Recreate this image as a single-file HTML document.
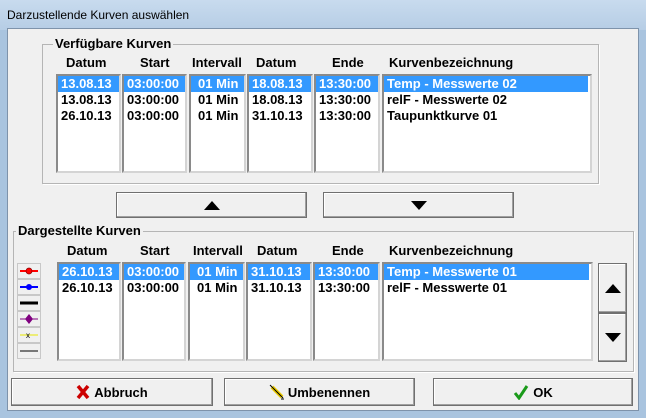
<html><head><style>
body{margin:0;width:646px;height:418px;background:#a9c4df;font-family:"Liberation Sans",sans-serif;position:relative;overflow:hidden}
.a{position:absolute}
.t{font-size:12px;color:#000}
.b{font-weight:bold;font-size:13px}
.lst{position:absolute;background:#fff;border:2px solid #8a8a8a;border-right-color:#d4d4d4;border-bottom-color:#d4d4d4;box-sizing:border-box;overflow:hidden}
.lst div{height:16px;line-height:16px;padding-left:3px;font-weight:bold;font-size:13px;white-space:nowrap}
.sel{background:#3399ff;color:#fff}
.btn{position:absolute;background:#f0f0f0;border:1px solid #707070;box-sizing:border-box;box-shadow:inset -1px -1px #a0a0a0,inset 1px 1px #fff;display:flex;align-items:center;justify-content:center;font-weight:bold;font-size:13px}
.grp{position:absolute;border:1px solid #b5b5b5;box-shadow:1px 1px #fff}
.lab{position:absolute;background:#f0f0f0;font-weight:bold;font-size:13px;padding:0 2px}
.hd{position:absolute;font-weight:bold;font-size:13px}
.leg{position:absolute;left:17px;width:24px;height:16px;background:#f0f0f0;border:1px solid #c8c8c8;box-sizing:border-box}
</style></head><body>
<div class="a" style="left:0;top:0;width:646px;height:30px;background:linear-gradient(#c8dbee,#b6cde5)"></div>
<div class="a t" style="left:7px;top:8px;font-size:12px">Darzustellende Kurven auswählen</div>
<div class="a" style="left:7px;top:28px;width:632px;height:383px;background:#f0f0f0;border:1px solid #7e93ab;box-sizing:border-box"></div>

<div class="grp" style="left:42px;top:44px;width:555px;height:138px"></div>
<div class="lab" style="left:53px;top:36px">Verfügbare Kurven</div>
<div class="hd" style="left:66px;top:55px">Datum</div>
<div class="hd" style="left:140px;top:55px">Start</div>
<div class="hd" style="left:192px;top:55px">Intervall</div>
<div class="hd" style="left:256px;top:55px">Datum</div>
<div class="hd" style="left:332px;top:55px">Ende</div>
<div class="hd" style="left:389px;top:55px">Kurvenbezeichnung</div>
<div class="lst" style="left:56px;top:74px;width:65px;height:99px"><div class="sel">13.08.13</div><div>13.08.13</div><div>26.10.13</div></div>
<div class="lst" style="left:122px;top:74px;width:65px;height:99px"><div class="sel">03:00:00</div><div>03:00:00</div><div>03:00:00</div></div>
<div class="lst" style="left:189px;top:74px;width:57px;height:99px"><div class="sel" style="padding-left:7px">01 Min</div><div style="padding-left:7px">01 Min</div><div style="padding-left:7px">01 Min</div></div>
<div class="lst" style="left:247px;top:74px;width:66px;height:99px"><div class="sel">18.08.13</div><div>18.08.13</div><div>31.10.13</div></div>
<div class="lst" style="left:314px;top:74px;width:66px;height:99px"><div class="sel">13:30:00</div><div>13:30:00</div><div>13:30:00</div></div>
<div class="lst" style="left:382px;top:74px;width:210px;height:99px"><div class="sel" style="margin-right:2px">Temp - Messwerte 02</div><div>relF - Messwerte 02</div><div>Taupunktkurve 01</div></div>

<div class="btn" style="left:116px;top:192px;width:191px;height:26px"><svg width="16" height="9"><polygon points="0,9 8,0 16,9" fill="#000"/></svg></div>
<div class="btn" style="left:323px;top:192px;width:191px;height:26px"><svg width="16" height="9"><polygon points="0,0 8,9 16,0" fill="#000"/></svg></div>

<div class="grp" style="left:13px;top:231px;width:619px;height:139px"></div>
<div class="lab" style="left:16px;top:223px">Dargestellte Kurven</div>
<div class="hd" style="left:67px;top:243px">Datum</div>
<div class="hd" style="left:140px;top:243px">Start</div>
<div class="hd" style="left:193px;top:243px">Intervall</div>
<div class="hd" style="left:257px;top:243px">Datum</div>
<div class="hd" style="left:332px;top:243px">Ende</div>
<div class="hd" style="left:389px;top:243px">Kurvenbezeichnung</div>
<div class="leg" style="top:263px"><svg width="22" height="14"><line x1="2" y1="7" x2="20" y2="7" stroke="red" stroke-width="2"/><circle cx="11" cy="7" r="3" fill="red" stroke="#800" stroke-width=".7"/></svg></div>
<div class="leg" style="top:279px"><svg width="22" height="14"><line x1="2" y1="7" x2="20" y2="7" stroke="blue" stroke-width="2"/><circle cx="11" cy="7" r="3" fill="blue"/></svg></div>
<div class="leg" style="top:295px"><svg width="22" height="14"><line x1="2" y1="7" x2="20" y2="7" stroke="#000" stroke-width="3"/></svg></div>
<div class="leg" style="top:311px"><svg width="22" height="14"><line x1="2" y1="7" x2="20" y2="7" stroke="#800080" stroke-width="1"/><polygon points="11,2 15,7 11,12 7,7" fill="#800080"/></svg></div>
<div class="leg" style="top:327px"><svg width="22" height="14"><line x1="2" y1="7" x2="20" y2="7" stroke="#e8e800" stroke-width="1"/><text x="8" y="10" font-size="8" font-family="Liberation Sans">x</text></svg></div>
<div class="leg" style="top:343px"><svg width="22" height="14"><line x1="2" y1="7" x2="20" y2="7" stroke="#000" stroke-width="1"/></svg></div>
<div class="lst" style="left:57px;top:262px;width:64px;height:99px"><div class="sel">26.10.13</div><div>26.10.13</div></div>
<div class="lst" style="left:122px;top:262px;width:64px;height:99px"><div class="sel">03:00:00</div><div>03:00:00</div></div>
<div class="lst" style="left:188px;top:262px;width:57px;height:99px"><div class="sel" style="padding-left:7px">01 Min</div><div style="padding-left:7px">01 Min</div></div>
<div class="lst" style="left:246px;top:262px;width:66px;height:99px"><div class="sel">31.10.13</div><div>31.10.13</div></div>
<div class="lst" style="left:313px;top:262px;width:67px;height:99px"><div class="sel">13:30:00</div><div>13:30:00</div></div>
<div class="lst" style="left:382px;top:262px;width:211px;height:99px"><div class="sel" style="margin-right:2px">Temp - Messwerte 01</div><div>relF - Messwerte 01</div></div>
<div class="btn" style="left:598px;top:263px;width:29px;height:50px"><svg width="16" height="9"><polygon points="0,9 8,0 16,9" fill="#000"/></svg></div>
<div class="btn" style="left:598px;top:313px;width:29px;height:49px"><svg width="16" height="9"><polygon points="0,0 8,9 16,0" fill="#000"/></svg></div>

<div class="btn" style="left:11px;top:378px;width:202px;height:28px"><svg width="14" height="16" style="margin-right:4px"><path d="M2,2 L12,14 M12,2 L2,14" stroke="#c00" stroke-width="3.5"/></svg>Abbruch</div>
<div class="btn" style="left:224px;top:378px;width:191px;height:28px"><svg width="16" height="16" style="margin-right:3px"><path d="M3,3 L13,13" stroke="#e8c800" stroke-width="4"/><path d="M1,1 L14,14" stroke="#000" stroke-width="1" fill="none"/><path d="M12,15 L15,15" stroke="#000"/></svg>Umbenennen</div>
<div class="btn" style="left:433px;top:378px;width:200px;height:28px"><svg width="16" height="16" style="margin-right:4px"><path d="M2,9 L6,14 L14,2" stroke="#1a9a1a" stroke-width="3" fill="none"/></svg>OK</div>
</body></html>
